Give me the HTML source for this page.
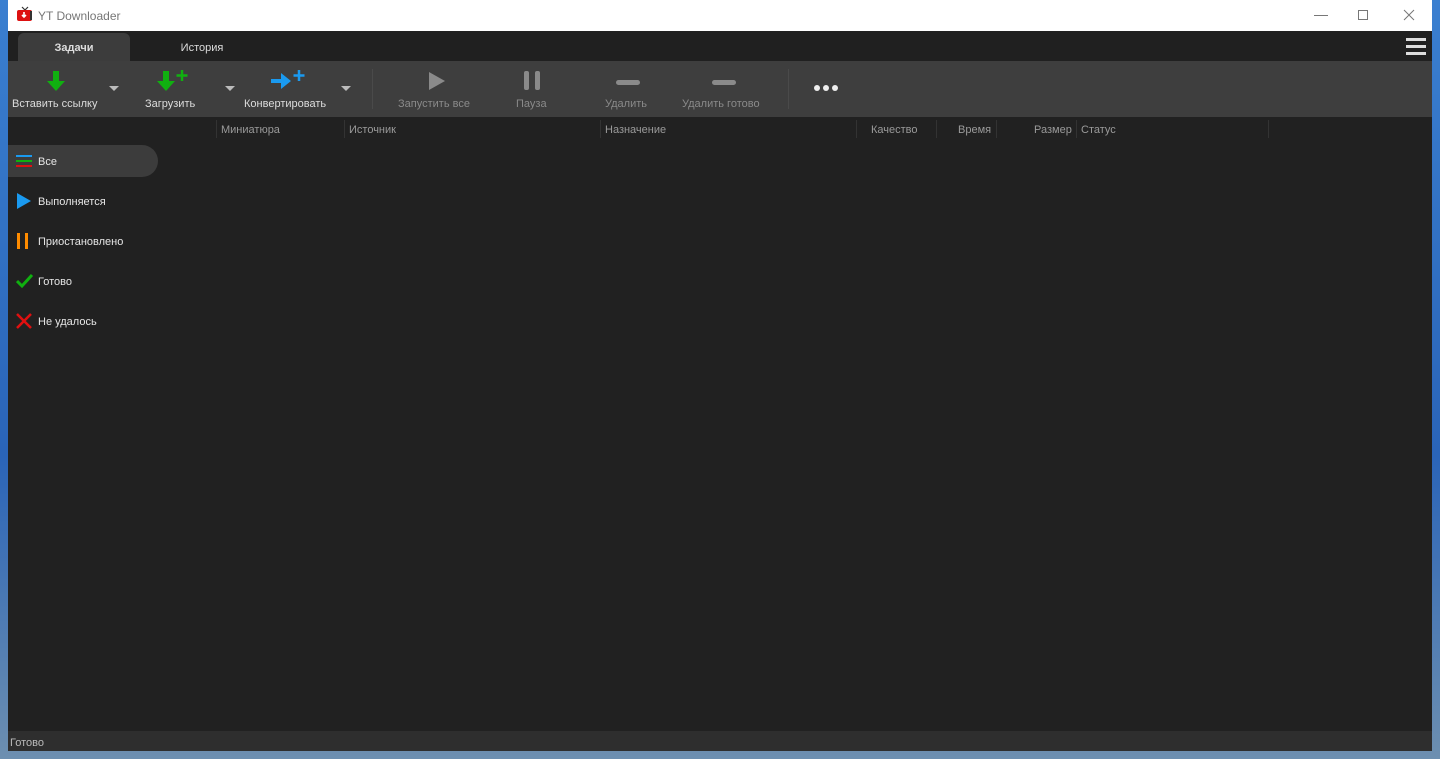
<!DOCTYPE html>
<html><head><meta charset="utf-8"><style>
*{margin:0;padding:0;box-sizing:border-box}
body{width:1440px;height:759px;overflow:hidden;background:linear-gradient(#3a7fd0,#2a64b8 60%,#6d8fb0);font-family:"Liberation Sans","DejaVu Sans",sans-serif;position:relative}
.win{position:absolute;left:8px;top:0;width:1424px;height:751px;background:#212121;overflow:hidden}
.title{height:31px;background:#fff;position:relative;color:#777;font-size:12px}
.title .t{position:absolute;left:30px;top:9px}
.tabs{position:absolute;top:31px;left:0;right:0;height:30px;background:#202020}
.tab{position:absolute;top:2px;height:28px;font-size:11px;color:#ddd;line-height:30px;text-align:center}
.tab.a{left:10px;width:112px;background:#3c3c3c;border-radius:6px 6px 0 0;font-weight:bold}
.tb{position:absolute;top:61px;left:0;right:0;height:56px;background:#3e3e3e}
.lbl{position:absolute;top:37px;font-size:11px;color:#ddd;white-space:nowrap}
.dis{color:#8a8a8a}
.dd{position:absolute;top:25px;width:0;height:0;border-left:5px solid transparent;border-right:5px solid transparent;border-top:5px solid #bbb}
.sep{position:absolute;top:8px;width:1px;height:40px;background:#4a4a4a}
.hdr{position:absolute;top:117px;left:0;right:0;height:24px;font-size:11px;color:#9a9a9a}
.hdr span{position:absolute;top:7px}
.hdr i{position:absolute;top:3px;width:1px;height:18px;background:#333}
.side{position:absolute;top:145px;left:0;font-size:11px;color:#e6e6e6}
.item{position:absolute;left:0;width:150px;height:32px}
.item .x{position:absolute;left:30px;top:11px}
.status{position:absolute;left:0;right:0;top:731px;height:20px;background:#2e2e2e;color:#bbb;font-size:11px;padding:6px 2px}
</style></head><body>
<div class="win">
<div class="title">
<svg style="position:absolute;left:8px;top:6px" width="18" height="17" viewBox="0 0 18 17"><path d="M6 1l3 3 3-3" stroke="#333" fill="none" stroke-width="1.2"/><rect x="1" y="4" width="15" height="11" rx="2" fill="#d11"/><rect x="14" y="5" width="2" height="9" fill="#333"/><path d="M8 6v5M6 9l2 2 2-2" stroke="#fff" stroke-width="1.6" fill="none"/></svg>
<span class="t">YT Downloader</span>
<div style="position:absolute;left:1306px;top:15px;width:14px;height:1px;background:#777"></div>
<div style="position:absolute;left:1350px;top:10px;width:10px;height:10px;border:1px solid #777"></div>
<svg style="position:absolute;left:1395px;top:9px" width="12" height="12"><path d="M1 1L11 11M11 1L1 11" stroke="#777"/></svg>
</div>
<div class="tabs">
<div class="tab a">Задачи</div>
<div class="tab" style="left:150px;width:88px">История</div>
<div style="position:absolute;right:6px;top:7px;width:20px;height:3px;background:#ddd;box-shadow:0 7px 0 #ddd,0 14px 0 #ddd"></div>
</div>
<div class="tb">
<svg style="position:absolute;left:38px;top:10px" width="20" height="21"><path d="M7 0h6v10h6l-9 10-9-10h6z" fill="#10b010"/></svg>
<div class="lbl" style="left:4px">Вставить ссылку</div>
<div class="dd" style="left:101px"></div>
<svg style="position:absolute;left:148px;top:9px" width="34" height="22"><path d="M7 1h6v10h6l-9 10-9-10h6z" fill="#10b010"/><path d="M26 0v11M20.5 5.5h11" stroke="#10b010" stroke-width="2.5"/></svg>
<div class="lbl" style="left:137px">Загрузить</div>
<div class="dd" style="left:217px"></div>
<svg style="position:absolute;left:263px;top:9px" width="36" height="22"><path d="M0 9h10v-6l10 8-10 8v-6h-10z" fill="#1a9af0"/><path d="M28 0v11M22.5 5.5h11" stroke="#1a9af0" stroke-width="2.5"/></svg>
<div class="lbl" style="left:236px">Конвертировать</div>
<div class="dd" style="left:333px"></div>
<div class="sep" style="left:364px"></div>
<svg style="position:absolute;left:419px;top:10px" width="20" height="20"><path d="M2 1l16 9-16 9z" fill="#8a8a8a"/></svg>
<div class="lbl dis" style="left:390px">Запустить все</div>
<div style="position:absolute;left:516px;top:10px;width:5px;height:19px;background:#8a8a8a;border-radius:2px"></div>
<div style="position:absolute;left:527px;top:10px;width:5px;height:19px;background:#8a8a8a;border-radius:2px"></div>
<div class="lbl dis" style="left:508px">Пауза</div>
<div style="position:absolute;left:608px;top:19px;width:24px;height:5px;background:#8a8a8a;border-radius:3px"></div>
<div class="lbl dis" style="left:597px">Удалить</div>
<div style="position:absolute;left:704px;top:19px;width:24px;height:5px;background:#8a8a8a;border-radius:3px"></div>
<div class="lbl dis" style="left:674px">Удалить готово</div>
<div class="sep" style="left:780px"></div>
<div style="position:absolute;left:806px;top:24px;width:6px;height:6px;border-radius:3px;background:#eee;box-shadow:9px 0 0 #eee,18px 0 0 #eee"></div>
</div>
<div class="hdr">
<i style="left:208px"></i><span style="left:213px">Миниатюра</span>
<i style="left:336px"></i><span style="left:341px">Источник</span>
<i style="left:592px"></i><span style="left:597px">Назначение</span>
<i style="left:848px"></i><span style="left:863px">Качество</span>
<i style="left:928px"></i><span style="left:950px">Время</span>
<i style="left:988px"></i><span style="left:1026px">Размер</span>
<i style="left:1068px"></i><span style="left:1073px">Статус</span>
<i style="left:1260px"></i>
</div>
<div class="side">
<div class="item" style="top:0;background:#3c3c3c;border-radius:0 16px 16px 0">
<div style="position:absolute;left:8px;top:10px;width:16px;height:2px;background:#1a9af0;box-shadow:0 5px 0 #10b010,0 10px 0 #e01010"></div>
<span class="x">Все</span></div>
<div class="item" style="top:40px"><svg style="position:absolute;left:8px;top:8px" width="16" height="16"><path d="M1 0l14 8-14 8z" fill="#1a9af0"/></svg><span class="x">Выполняется</span></div>
<div class="item" style="top:80px"><div style="position:absolute;left:9px;top:8px;width:3px;height:16px;background:#ff8c00;box-shadow:8px 0 0 #ff8c00"></div><span class="x">Приостановлено</span></div>
<div class="item" style="top:120px"><svg style="position:absolute;left:8px;top:8px" width="17" height="16"><path d="M1 8l5 5 10-11" stroke="#10b010" stroke-width="3" fill="none"/></svg><span class="x">Готово</span></div>
<div class="item" style="top:160px"><svg style="position:absolute;left:8px;top:8px" width="16" height="16"><path d="M1 1l14 14M15 1L1 15" stroke="#e01010" stroke-width="2.5"/></svg><span class="x">Не удалось</span></div>
</div>
<div class="status">Готово</div>
</div>
</body></html>
